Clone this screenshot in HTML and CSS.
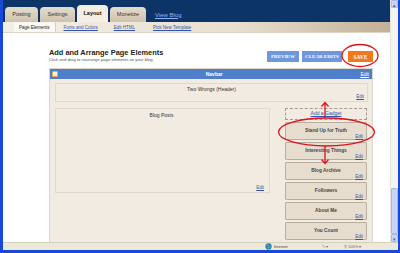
FILE: index.html
```html
<!DOCTYPE html>
<html lang="en">
<head>
    <meta charset="UTF-8">
    <title>Blogger: Layout</title>
    <link rel="stylesheet" href="styles.css">
</head>
<body>
    <div class="window">
        <div class="viewport">
            <div class="page">
                <div class="topbar">
                    <span class="tab">Posting</span>
                    <span class="tab">Settings</span>
                    <span class="tab active">Layout</span>
                    <span class="tab">Monetize</span>
                    <a class="view-blog" href="#">View Blog</a>
                </div>

                <div class="subbar">
                    <span class="subtab current">Page Elements</span>
                    <a class="subtab" href="#">Fonts and Colors</a>
                    <a class="subtab" href="#">Edit HTML</a>
                    <a class="subtab" href="#">Pick New Template</a>
                </div>

                <div class="content">
                    <div class="head-row">
                        <div class="titles">
                            <h1>Add and Arrange Page Elements</h1>
                            <p>Click and drag to rearrange page elements on your blog.</p>
                        </div>
                        <div class="buttons">
                            <button class="btn">PREVIEW</button>
                            <button class="btn">CLEAR EDITS</button>
                            <button class="btn save">SAVE</button>
                        </div>
                    </div>

                    <div class="panel">
                        <div class="navbar">
                            <span class="nav-icon"></span>
                            <span class="nav-title">Navbar</span>
                            <a class="nav-edit" href="#">Edit</a>
                        </div>
                        <div class="panel-body">
                            <div class="box header-box">
                                <div class="label">Two Wrongs (Header)</div>
                                <a class="edit" href="#">Edit</a>
                            </div>
                            <div class="columns">
                                <div class="box main-box">
                                    <div class="label">Blog Posts</div>
                                    <a class="edit" href="#">Edit</a>
                                </div>
                                <div class="sidebar">
                                    <div class="add-gadget"><a href="#">Add a Gadget</a></div>
                                    <div class="gadget"><div class="label">Stand Up for Truth</div><a class="edit" href="#">Edit</a></div>
                                    <div class="gadget"><div class="label">Interesting Things</div><a class="edit" href="#">Edit</a></div>
                                    <div class="gadget"><div class="label">Blog Archive</div><a class="edit" href="#">Edit</a></div>
                                    <div class="gadget"><div class="label">Followers</div><a class="edit" href="#">Edit</a></div>
                                    <div class="gadget"><div class="label">About Me</div><a class="edit" href="#">Edit</a></div>
                                    <div class="gadget"><div class="label">You Count</div><a class="edit" href="#">Edit</a></div>
                                </div>
                            </div>
                        </div>
                    </div>
                </div>
            </div>

            <div class="scrollbar">
                <span class="arrow">&#9652;</span>
                <span class="track"></span>
                <span class="thumb"></span>
                <span class="arrow">&#9662;</span>
            </div>
        </div>

        <div class="statusbar">
            <span class="zone">
                <svg width="7" height="7" viewBox="0 0 10 10"><circle cx="5" cy="5" r="4.5" fill="#2a7fc4"/><path d="M2 4 Q4 2 5 4 T8 6 M3 7 Q5 6 6 8" stroke="#5cb04a" stroke-width="1.6" fill="none"/></svg>
                Internet
            </span>
            <span class="status-tool">&#9998; &#9662;</span>
            <span class="status-tool">&#9906; 100% &#9662;</span>
        </div>

        <!-- hand-drawn annotations over the screenshot -->
        <svg class="marks" width="400" height="253" viewBox="0 0 400 253">
            <ellipse cx="360" cy="55.5" rx="18" ry="11" fill="none" stroke="#e0101a" stroke-width="1.3"/>
            <ellipse cx="326.5" cy="132" rx="48" ry="14" fill="none" stroke="#e0101a" stroke-width="1.3"/>
            <path d="M325 118 V103 M321.5 106.5 L325 102.5 L328.5 106.5" fill="none" stroke="#e0101a" stroke-width="1.3"/>
            <path d="M325 146 V163 M321.5 159.5 L325 163.5 L328.5 159.5" fill="none" stroke="#e0101a" stroke-width="1.3"/>
        </svg>
    </div>
</body>
</html>
```

FILE: styles.css
```css
* {
    box-sizing: border-box;
}

body {
    margin: 0;
    font-family: "Liberation Sans", Arial, sans-serif;
    background: #fff;
}

a {
    color: #3054a8;
}

.window {
    position: relative;
    width: 400px;
    height: 253px;
    display: flex;
    flex-direction: column;
    border-left: 3px solid #1848d8;
    border-right: 2px solid #1848d8;
    border-bottom: 3px solid #1848d8;
    overflow: hidden;
}

.viewport {
    display: flex;
    height: 242px;
}

.page {
    flex: 1;
    overflow: hidden;
    background: #fff;
}

/* top navy bar with tabs */
.topbar {
    height: 22px;
    background: #0c3466;
    display: flex;
    align-items: flex-end;
    padding-left: 2px;
    gap: 2px;
}

.tab {
    height: 15px;
    padding-top: 4px;
    text-align: center;
    font-size: 5.5px;
    color: #333;
    background: linear-gradient(#e4dccd, #cfc3ad);
    border-radius: 4px 4px 0 0;
}

.tab:nth-child(1) { width: 33px; }
.tab:nth-child(2) { width: 35px; }
.tab:nth-child(4) { width: 36px; }

.tab.active {
    width: 31px;
    height: 17px;
    padding-top: 5px;
    background: #f4eee4;
    font-weight: bold;
    color: #111;
}

.view-blog {
    margin-left: 7px;
    align-self: center;
    margin-top: 7px;
    font-size: 6px;
    color: #8cb4ff;
}

/* sub tabs */
.subbar {
    height: 11px;
    display: flex;
    align-items: stretch;
    padding-left: 11px;
    gap: 4px;
    background: linear-gradient(90deg, #f4efe6 0%, #e9dfd0 60%, #c2b096 100%);
    border-bottom: 1px solid #e0d6c6;
}

.subtab {
    font-size: 4.5px;
    line-height: 11px;
    padding: 0 4px;
}

.subtab:nth-child(3) { margin-left: 4px; }
.subtab:nth-child(4) { margin-left: 6px; }

.subtab.current {
    background: #fbf8f3;
    color: #222;
    padding: 0 5px;
    border-right: 1px solid #d8cfc0;
}

/* content */
.content {
    padding: 12px 17px 0 46px;
}

.head-row {
    display: flex;
    justify-content: space-between;
    align-items: flex-end;
    height: 17px;
}

.titles h1 {
    margin: 0;
    font-size: 7.4px;
    font-weight: bold;
    color: #222;
    line-height: 9px;
}

.titles p {
    margin: 0;
    font-size: 4.2px;
    color: #555;
    line-height: 5px;
}

.buttons {
    display: flex;
    gap: 3px;
}

.btn {
    height: 11px;
    padding: 0;
    border: none;
    background: #6f97de;
    color: #fff;
    font-family: "Liberation Serif", serif;
    font-weight: bold;
    font-size: 5px;
    white-space: nowrap;
}

.btn:nth-child(1) { width: 32px; }
.btn:nth-child(2) { width: 40px; }
.btn.save {
    width: 25px;
    margin-left: 3px;
    background: #f2781c;
    font-size: 5.5px;
}

/* page elements panel */
.panel {
    margin-top: 6px;
    width: 324px;
    height: 180px;
    background: #f2ebe2;
    border: 1px solid #ddd5ca;
    border-bottom: none;
}

.navbar {
    height: 10px;
    background: #4f7fca;
    display: flex;
    align-items: center;
    padding: 0 3px 0 2px;
    font-size: 5px;
    color: #fff;
}

.nav-icon {
    width: 6px;
    height: 6px;
    background: #fff6e0;
    border: 1px solid #f2a23a;
    border-radius: 1px;
}

.nav-title {
    flex: 1;
    text-align: center;
    font-weight: bold;
    padding-left: 10px;
}

.nav-edit {
    color: #fff;
    font-size: 5px;
}

.panel-body {
    padding: 4px 4px 0 5px;
}

.box {
    border: 1px solid #e2d9cc;
    display: flex;
    flex-direction: column;
    justify-content: space-between;
    padding: 3px 3px 1px;
}

.label {
    text-align: center;
    font-size: 5px;
    color: #333;
    line-height: 7px;
}

.edit {
    align-self: flex-end;
    font-size: 4.5px;
    line-height: 6px;
}

.header-box {
    height: 19px;
    padding-top: 2px;
}

.columns {
    display: flex;
    justify-content: space-between;
    margin-top: 6px;
}

.main-box {
    width: 215px;
    height: 85px;
    padding-right: 5px;
}

.sidebar {
    width: 82px;
    margin-right: 1px;
    display: flex;
    flex-direction: column;
    gap: 2px;
}

.add-gadget {
    height: 12px;
    border: 1px dashed #a69c90;
    text-align: center;
    font-size: 5px;
    line-height: 8px;
}

.gadget {
    height: 18px;
    background: #e7ddcf;
    border: 1px solid #b9ae9f;
    border-radius: 1px;
    padding: 4px 3px 0;
    display: flex;
    flex-direction: column;
}

.gadget .label {
    font-weight: bold;
    color: #444;
    font-size: 4.8px;
}

/* browser chrome */
.scrollbar {
    width: 8px;
    display: flex;
    flex-direction: column;
    background: #f4f4f0;
    border-left: 1px solid #e4e4e0;
}

.scrollbar .arrow {
    height: 8px;
    font-size: 5px;
    line-height: 8px;
    text-align: center;
    color: #4d6185;
    background: #c8d6f6;
    border: 1px solid #aabbe4;
    border-radius: 1px;
}

.scrollbar .track {
    flex: 1;
}

.scrollbar .thumb {
    height: 46px;
    background: #c6d4f5;
    border: 1px solid #a8b8e0;
    border-radius: 1px;
}

.statusbar {
    height: 8px;
    background: #ece9d8;
    border-top: 1px solid #d4d0c0;
    display: flex;
    align-items: center;
    padding-left: 262px;
    font-size: 4px;
    color: #444;
}

.zone {
    display: flex;
    align-items: center;
    gap: 2px;
    width: 57px;
}

.status-tool {
    width: 22px;
    color: #667;
}

.marks {
    position: absolute;
    top: 0;
    left: -3px;
    pointer-events: none;
}
```
